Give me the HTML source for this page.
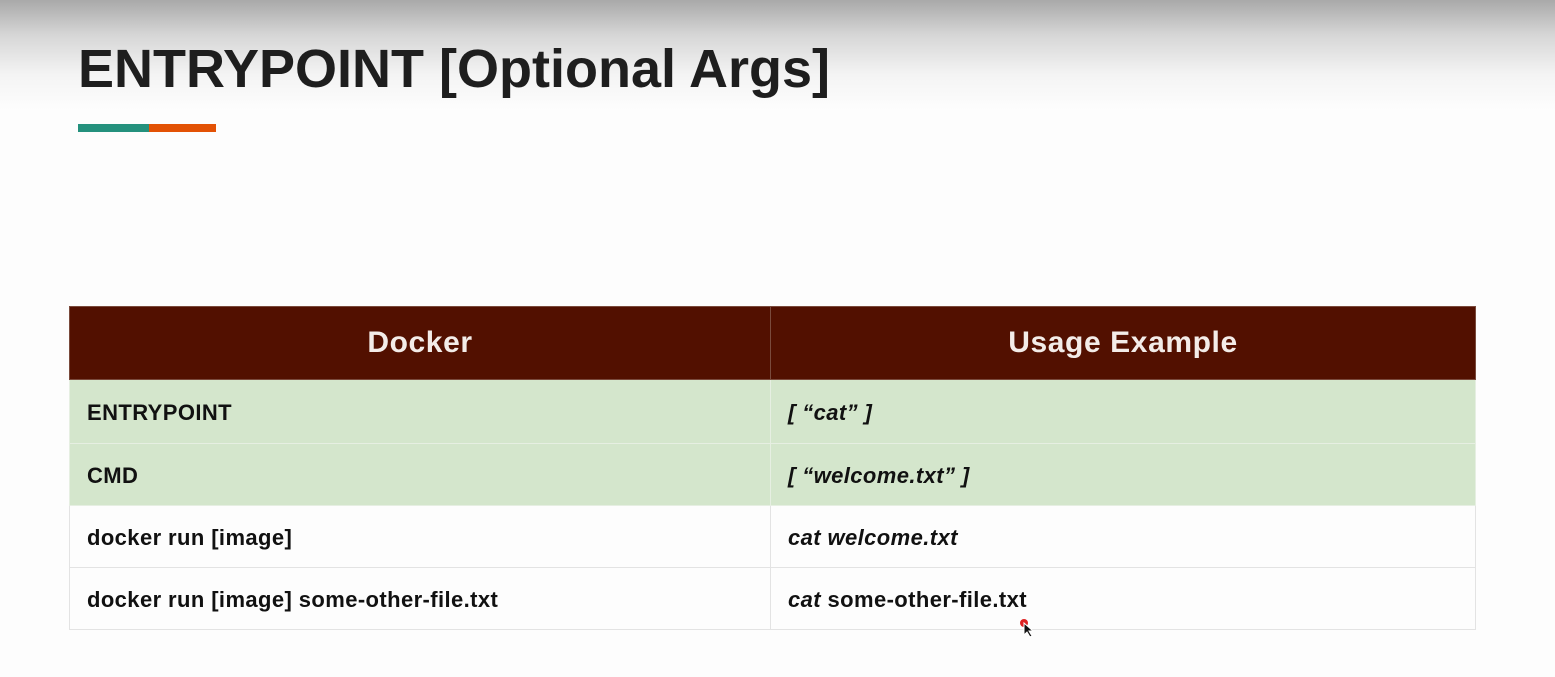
<!DOCTYPE html>
<html><head><style>
body{margin:0;width:1555px;height:677px;overflow:hidden;background:#fdfdfd;font-family:"Liberation Sans",Arial,sans-serif;position:relative}
.grad{position:absolute;left:0;top:0;width:1555px;height:120px;background:linear-gradient(#a9a9a9 0,#d6d6d6 35px,#f4f4f4 75px,#fdfdfd 110px)}
h1{position:absolute;left:78px;top:38px;margin:0;font-size:54px;font-weight:bold;color:#1e1e1e;letter-spacing:0;white-space:nowrap}
.b1{position:absolute;left:78px;top:124px;width:71px;height:8px;background:#24917d}
.b2{position:absolute;left:149px;top:124px;width:67px;height:8px;background:#e35205}
table{position:absolute;left:69px;top:306px;width:1406px;border-collapse:collapse;table-layout:fixed}
td,th{border:1px solid #e3e3e3;padding:0 0 0 17px;font-size:22px;letter-spacing:0.4px;font-weight:bold;color:#111;text-align:left}
th{background:#521000;color:#f3ece8;font-size:30px;letter-spacing:0.6px;text-align:center;height:72px;padding:0;border-color:#7a4a3c}
tr.g td{background:#d4e6cc;border-color:#e6efe2}
td{height:62px;padding-top:2px;box-sizing:border-box}
i{font-style:italic}
</style></head><body>
<div class="grad"></div>
<h1>ENTRYPOINT [Optional Args]</h1>
<div class="b1"></div><div class="b2"></div>
<table>
<colgroup><col style="width:701px"><col style="width:705px"></colgroup>
<tr><th>Docker</th><th>Usage Example</th></tr>
<tr class="g"><td style="height:64px">ENTRYPOINT</td><td><i>[ “cat” ]</i></td></tr>
<tr class="g"><td>CMD</td><td><i>[ “welcome.txt” ]</i></td></tr>
<tr><td>docker run [image]</td><td><i>cat welcome.txt</i></td></tr>
<tr><td>docker run [image] some-other-file.txt</td><td><i>cat</i> some-other-file.txt</td></tr>
</table>
<div style="position:absolute;left:1020px;top:619px;width:8px;height:8px;border-radius:50%;background:#d22"></div>
<svg style="position:absolute;left:1023px;top:622px" width="12" height="16"><path d="M1 1 L1 13 L4 10 L7 15 L9 14 L6 9 L10 9 Z" fill="#111" stroke="#fff" stroke-width="1"/></svg>
</body></html>
